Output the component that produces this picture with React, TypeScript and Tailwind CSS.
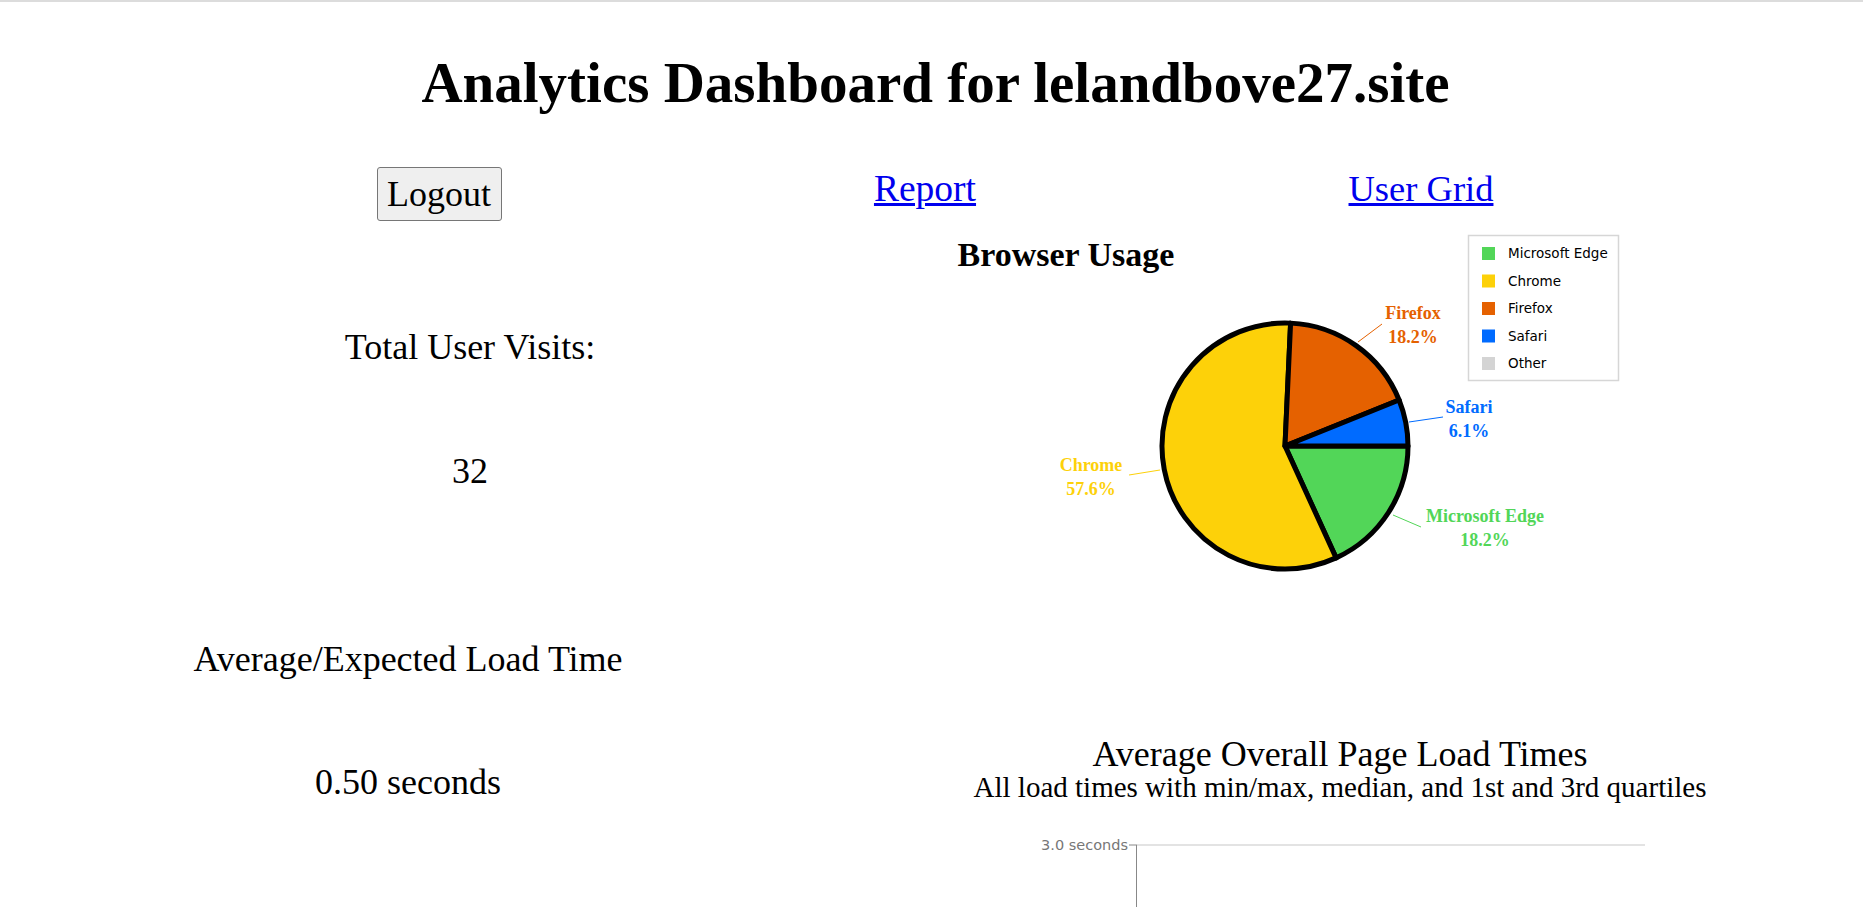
import React from 'react'

const slices = [
  { name: 'Microsoft Edge', value: 18.2, color: '#52D658' },
  { name: 'Chrome', value: 57.6, color: '#FDD109' },
  { name: 'Firefox', value: 18.2, color: '#E56100' },
  { name: 'Safari', value: 6.1, color: '#006BFF' },
  { name: 'Other', value: 0, color: '#D4D4D4' },
]

// label positions measured off the chart, in svg coords
const labels = [
  { name: 'Firefox', pct: '18.2%', color: '#E56100', x: 473, y: 94, line: [418, 117, 442, 99] },
  { name: 'Safari', pct: '6.1%', color: '#006BFF', x: 529, y: 188, line: [469, 197, 503, 192] },
  { name: 'Chrome', pct: '57.6%', color: '#FDD109', x: 151, y: 246, line: [189, 250, 220, 245] },
  { name: 'Microsoft Edge', pct: '18.2%', color: '#52D658', x: 545, y: 297, line: [453, 290, 481, 302] },
]

function slicePath(cx: number, cy: number, r: number, a0: number, a1: number) {
  const rad = (a: number) => (a * Math.PI) / 180
  const x0 = cx + r * Math.cos(rad(a0))
  const y0 = cy + r * Math.sin(rad(a0))
  const x1 = cx + r * Math.cos(rad(a1))
  const y1 = cy + r * Math.sin(rad(a1))
  const large = a1 - a0 > 180 ? 1 : 0
  return `M ${cx} ${cy} L ${x0} ${y0} A ${r} ${r} 0 ${large} 1 ${x1} ${y1} Z`
}

function BrowserChart() {
  const total = slices.reduce((s, d) => s + d.value, 0)
  let angle = 0
  const cx = 345
  const cy = 221
  const r = 123

  return (
    <svg width={720} height={475} className="block">
      <text x={126} y={41} textAnchor="middle" fontSize={34} fontWeight={700} fontFamily="'Liberation Serif', serif" fill="#000">
        Browser Usage
      </text>

      {slices
        .filter((d) => d.value > 0)
        .map((d) => {
          const a0 = angle
          angle += (d.value / total) * 360
          return (
            <path key={d.name} d={slicePath(cx, cy, r, a0, angle)} fill={d.color} stroke="#000" strokeWidth={5} strokeLinejoin="round" />
          )
        })}

      {labels.map((l) => (
        <g key={l.name} fill={l.color} fontFamily="'Liberation Serif', serif" fontSize={18} fontWeight={700} textAnchor="middle">
          <line x1={l.line[0]} y1={l.line[1]} x2={l.line[2]} y2={l.line[3]} stroke={l.color} strokeWidth={1} />
          <text x={l.x} y={l.y}>{l.name}</text>
          <text x={l.x} y={l.y + 24}>{l.pct}</text>
        </g>
      ))}

      <rect x={528.5} y={10.5} width={150} height={145} fill="#fff" stroke="#d6d6d6" strokeWidth={1.5} />
      {slices.map((d, i) => (
        <g key={d.name}>
          <rect x={542} y={22 + i * 27.5} width={13} height={13} fill={d.color} />
          <text x={568} y={33 + i * 27.5} fontSize={13.5} fontFamily="'DejaVu Sans', sans-serif" fill="#000">
            {d.name}
          </text>
        </g>
      ))}
    </svg>
  )
}

function LoadTimeAxis() {
  return (
    <svg width={800} height={110} className="block">
      <text x={188} y={48} textAnchor="end" fontSize={14.5} fontFamily="'DejaVu Sans', sans-serif" fill="#777">
        3.0 seconds
      </text>
      <line x1={197} y1={43} x2={705} y2={43} stroke="#e3e3e3" strokeWidth={2} />
      <line x1={189} y1={43} x2={197} y2={43} stroke="#888" strokeWidth={1} />
      <line x1={196.5} y1={43} x2={196.5} y2={110} stroke="#888" strokeWidth={1} />
    </svg>
  )
}

export default function App() {
  return (
    <div className="min-h-screen bg-white border-t-2 border-[#dcdcdc] font-['Liberation_Serif',serif] text-black">
      <h1 className="mt-[49px] pl-[8px] text-center text-[57px] leading-[64px] font-bold">
        Analytics Dashboard for lelandbove27.site
      </h1>

      <div className="mt-[52px] ml-[194px] flex">
        <div className="w-[490px] flex justify-center">
          <button className="w-[125px] h-[54px] bg-[#efefef] border border-[#767676] rounded-[3px] text-[36px] leading-[40px]">
            Logout
          </button>
        </div>
        <div className="w-[490px] flex justify-center pt-[2px] pr-[8px]">
          <a href="#" className="text-[37.5px] leading-[40px] text-[#0000ee] underline">
            Report
          </a>
        </div>
        <div className="w-[490px] flex justify-center pt-[2px] pl-[4px]">
          <a href="#" className="text-[36.5px] leading-[40px] text-[#0000ee] underline">
            User Grid
          </a>
        </div>
      </div>

      <div className="flex">
        <div className="w-[940px] shrink-0 pt-[106px] text-[36px] leading-[40px]">
          <div className="text-center">
            <p>Total User Visits:</p>
            <p className="mt-[84px]">32</p>
          </div>
          <div className="mt-[148px] pr-[124px] text-center">
            <p>Average/Expected Load Time</p>
            <p className="mt-[83px]">0.50 seconds</p>
          </div>
        </div>

        <div className="pt-[4px]">
          <BrowserChart />
          <div className="w-[800px] mt-[36px] text-center">
            <p className="text-[36px] leading-[36px]">Average Overall Page Load Times</p>
            <p className="text-[29px] leading-[30px]">All load times with min/max, median, and 1st and 3rd quartiles</p>
          </div>
          <LoadTimeAxis />
        </div>
      </div>
    </div>
  )
}
